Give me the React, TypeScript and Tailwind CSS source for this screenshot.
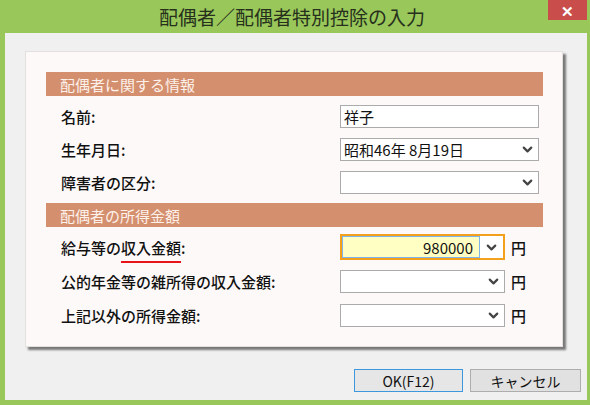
import { ChevronDown } from 'lucide-react';

const jp = { fontFamily: '"Noto Sans CJK JP", "Noto Sans", sans-serif' };

function Header({ title }: { title: string }) {
  return (
    <div className="h-[24px] w-[497px] bg-[#d48f6e] pl-[14px] flex items-center text-[15px] text-[#fdf1ea] leading-none">
      {title}
    </div>
  );
}

function Row({ label, children, h = 'h-[33px]' }: { label: React.ReactNode; children: React.ReactNode; h?: string }) {
  return (
    <div className={`flex items-center ${h}`}>
      <div className="w-[294px] pl-[15px] text-[15px] font-medium text-[#111] leading-none">{label}</div>
      {children}
    </div>
  );
}

function Field({ value, select, wide = true, active }: { value?: string; select?: boolean; wide?: boolean; active?: boolean }) {
  return (
    <div
      className={`flex items-center bg-white ${wide ? 'w-[199px]' : 'w-[165px]'} ${
        active ? 'h-[26px] border-2 border-[#f3a11d]' : 'h-[23px] border border-[#ababab]'
      }`}
    >
      <div className={`flex-1 h-full flex items-center text-[15px] text-[#111] leading-none ${active ? 'justify-end bg-[#ffffc4] border border-[#7eb4ea] pr-[6px]' : 'pl-[3px]'}`}>
        {value}
      </div>
      {select && (
        <div className={`w-[22px] flex items-center justify-center ${active ? 'mr-[1px]' : ''}`}>
          <ChevronDown size={15} strokeWidth={3.5} className="text-[#444]" />
        </div>
      )}
    </div>
  );
}

function Yen({ children }: { children: React.ReactNode }) {
  return (
    <div className="flex items-center">
      {children}
      <span className="ml-[6px] text-[15px] font-medium text-[#111] leading-none">円</span>
    </div>
  );
}

export default function App() {
  return (
    <div className="w-[590px] h-[405px] bg-[#99c75a] flex flex-col pl-[5px] pr-[3px] pb-[5px]" style={jp}>
      <div className="h-[33px] relative flex items-center justify-center">
        <span className="text-[19px] text-[#26301c] leading-none -ml-[8px]">配偶者／配偶者特別控除の入力</span>
        <div className="absolute right-0 top-0 w-[39px] h-[20px] bg-[#c84d4b] flex items-center justify-center text-white text-[15px] font-bold leading-none">
          ✕
        </div>
      </div>
      <div className="flex-1 bg-[#f0f0f0] flex flex-col">
        <div className="ml-[20px] mt-[18px] w-[538px] h-[296px] bg-[#fdf9f8] border border-[#e4e0df] shadow-[3px_3px_2px_rgba(0,0,0,0.5)] pl-[20px] pt-[20px]">
          <Header title="配偶者に関する情報" />
          <div className="mt-[4px]">
            <Row label="名前:"><Field value="祥子" /></Row>
            <Row label="生年月日:"><Field value="昭和46年 8月19日" select /></Row>
            <Row label="障害者の区分:"><Field select /></Row>
          </div>
          <div className="mt-[4px]">
            <Header title="配偶者の所得金額" />
          </div>
          <div className="mt-[3px]">
            <Row h="h-[34px]" label={<span>給与等の<span className="relative">収入金額<span className="absolute left-0 right-0 -bottom-[5px] h-[2px] bg-[#e8141a]" /></span>:</span>}>
              <Yen><Field value="980000" select wide={false} active /></Yen>
            </Row>
            <Row h="h-[34px]" label="公的年金等の雑所得の収入金額:">
              <Yen><Field select wide={false} /></Yen>
            </Row>
            <Row h="h-[34px]" label="上記以外の所得金額:">
              <Yen><Field select wide={false} /></Yen>
            </Row>
          </div>
        </div>
        <div className="flex justify-end gap-[7px] mt-[22px] pr-[6px]">
          <button className="w-[109px] h-[23px] border border-[#3c97dd] bg-[#e6e6e6] text-[14px] text-[#111] leading-none">OK(F12)</button>
          <button className="w-[111px] h-[23px] border border-[#adadad] bg-[#e1e1e1] text-[14px] text-[#111] leading-none">キャンセル</button>
        </div>
      </div>
    </div>
  );
}
